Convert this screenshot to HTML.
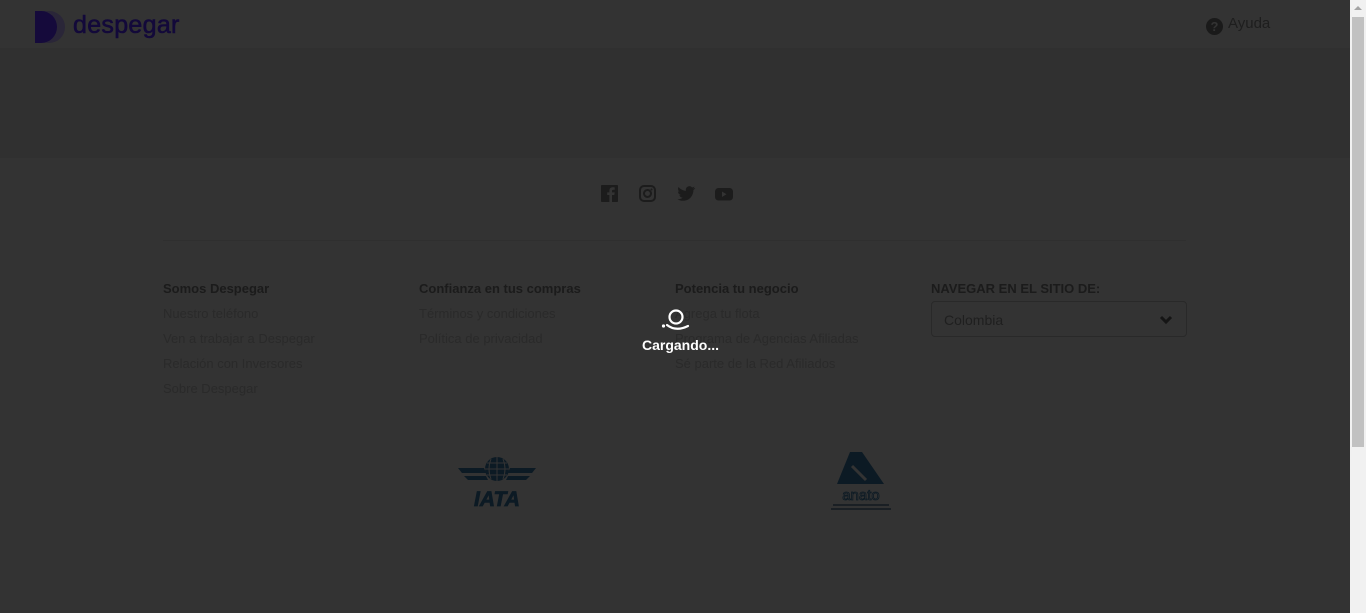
<!DOCTYPE html>
<html><head><meta charset="utf-8"><style>
*{margin:0;padding:0;box-sizing:border-box}
body{width:1366px;height:613px;overflow:hidden;background:#333;font-family:"Liberation Sans",sans-serif;position:relative}
.hdr{position:absolute;left:0;top:0;width:1350px;height:48px;background:#333}
.band{position:absolute;left:0;top:48px;width:1350px;height:110px;background:#303030}
.sb{position:absolute;left:1350px;top:0;width:16px;height:613px;background:#f1f1f1}
.sb .th{position:absolute;left:2px;top:17px;width:12px;height:430px;background:#c1c1c1}
.sb .ar{position:absolute;left:4px;top:6px;width:0;height:0;border-left:4px solid transparent;border-right:4px solid transparent;border-bottom:4px solid #a3a3a3}
.logo{position:absolute;left:35px;top:11px}
.logotxt{position:absolute;left:73px;top:11px;font-size:25px;color:#13093a;font-weight:normal;-webkit-text-stroke:0.6px #13093a;letter-spacing:0.3px}
.help{position:absolute;left:1206px;top:15px;font-size:15px;color:#1e1e1e}
.help span.q{display:inline-block;width:17px;height:17px;border-radius:50%;background:#1a1a1a;color:#333;font-size:13px;font-weight:bold;text-align:center;line-height:17px;vertical-align:-3px;margin-right:5px}
.line{position:absolute;left:163px;top:240px;width:1023px;height:1px;background:#2f2f2f}
.col{position:absolute;top:281px;font-size:13px;color:#2a2a2a}
.col b{display:block;color:#1b1b1b;font-weight:bold;margin-bottom:10px;height:15px}
.col div{height:25px}
.sel{position:absolute;left:931px;top:301px;width:256px;height:36px;border:1px solid #292929;border-radius:4px;font-size:14px;color:#1f1f1f;padding:10px 12px}
.load{position:absolute;left:642px;top:337px;color:#fff;font-size:14px;font-weight:bold}
</style></head><body>
<div class="hdr"></div><div class="band"></div>
<svg class="logo" width="32" height="32" viewBox="0 0 32 32"><path d="M6 0h8a16 16 0 0 1 0 32H6z" fill="#2a2638"/><path d="M0 0h6a16 16 0 0 1 0 32H0z" fill="#150a3b"/></svg>
<div class="logotxt">despegar</div>
<div class="help"><span class="q">?</span>Ayuda</div>
<svg style="position:absolute;left:600px;top:184px" width="140" height="20" viewBox="0 0 140 20">
<rect x="1" y="1" width="17" height="17" rx="1" fill="#1c1c1c"/><path d="M12 18v-7h2.3l.4-2.6H12V7c0-.8.3-1.3 1.4-1.3h1.3V3.4c-.3 0-1.1-.1-2-.1-2 0-3.3 1.2-3.3 3.4v1.7H7.2V11h2.2v7z" fill="#333"/>
<rect x="40" y="2" width="15" height="15" rx="4" fill="none" stroke="#1c1c1c" stroke-width="2"/><circle cx="47.5" cy="9.5" r="3.5" fill="none" stroke="#1c1c1c" stroke-width="2"/><circle cx="51.5" cy="5.5" r="1" fill="#1c1c1c"/>
<path d="M95 4c-.7.3-1.4.5-2.1.6.8-.5 1.3-1.2 1.6-2-.7.4-1.5.7-2.300.9a3.6 3.6 0 0 0-6.2 3.3c-3-.1-5.7-1.6-7.5-3.8-.9 1.7-.4 3.7 1.1 4.8-.6 0-1.1-.2-1.6-.4 0 1.8 1.2 3.3 2.9 3.6-.5.1-1.1.2-1.6.1.5 1.5 1.9 2.5 3.4 2.5-1.5 1.2-3.4 1.8-5.3 1.6 1.6 1 3.6 1.6 5.6 1.6 6.8 0 10.5-5.6 10.4-10.8.7-.5 1.300-1.1 1.8-1.8z" fill="#1c1c1c"/>
<rect x="115" y="4" width="18" height="12.5" rx="3.5" fill="#1c1c1c"/><path d="M122 7.5v5.5l4.5-2.75z" fill="#333"/>
</svg>
<div class="line"></div>
<div class="col" style="left:163px"><b>Somos Despegar</b><div>Nuestro teléfono</div><div>Ven a trabajar a Despegar</div><div>Relación con Inversores</div><div>Sobre Despegar</div></div>
<div class="col" style="left:419px"><b>Confianza en tus compras</b><div>Términos y condiciones</div><div>Política de privacidad</div></div>
<div class="col" style="left:675px"><b>Potencia tu negocio</b><div>Agrega tu flota</div><div>Programa de Agencias Afiliadas</div><div>Sé parte de la Red Afiliados</div></div>
<div class="col" style="left:931px"><b>NAVEGAR EN EL SITIO DE:</b></div>
<div class="sel">Colombia<svg style="position:absolute;right:13px;top:13px" width="14" height="10" viewBox="0 0 14 10"><path d="M2 2l5 5 5-5" fill="none" stroke="#151515" stroke-width="3"/></svg></div>
<svg style="position:absolute;left:456px;top:456px" width="82" height="54" viewBox="0 0 82 54">
<circle cx="41" cy="13" r="12" fill="#0c1a24"/><path d="M29 13h24M41 1v24M35 3q-4 10 0 20M47 3q4 10 0 20M31 7h20M31 19h20" stroke="#333" stroke-width="1" fill="none"/>
<path d="M2 12h26l2 5H6zM8 20h22l2 4H12zM80 12H54l-2 5h24zM74 20H52l-2 4h20z" fill="#0c1a24"/>
<text x="41" y="50" text-anchor="middle" font-family="Liberation Sans" font-weight="900" font-style="italic" font-size="21" fill="#0c1a24" stroke="#0c1a24" stroke-width="0.8">IATA</text></svg>
<svg style="position:absolute;left:828px;top:450px" width="66" height="64" viewBox="0 0 66 64">
<path d="M22 2h12l22 32H9z" fill="#0c1a24"/><path d="M24 16l14 14" stroke="#333" stroke-width="3"/>
<text x="33" y="50" text-anchor="middle" font-family="Liberation Sans" font-size="15" fill="none" stroke="#0c1a24" stroke-width="0.8">anato</text>
<rect x="5" y="54" width="56" height="2" fill="#1a1f24"/><rect x="3" y="58" width="60" height="2" fill="#1a1f24"/></svg>
<svg style="position:absolute;left:658px;top:306px" width="36" height="30" viewBox="0 0 36 30">
<circle cx="18" cy="11" r="6.5" fill="none" stroke="#fff" stroke-width="2.2"/><path d="M9 19q9 7 21 1" fill="none" stroke="#fff" stroke-width="2.2" stroke-linecap="round"/><circle cx="5.5" cy="20" r="1.6" fill="#fff"/></svg>
<div class="load">Cargando...</div>
<div class="sb"><div class="ar"></div><div class="th"></div></div>
</body></html>
